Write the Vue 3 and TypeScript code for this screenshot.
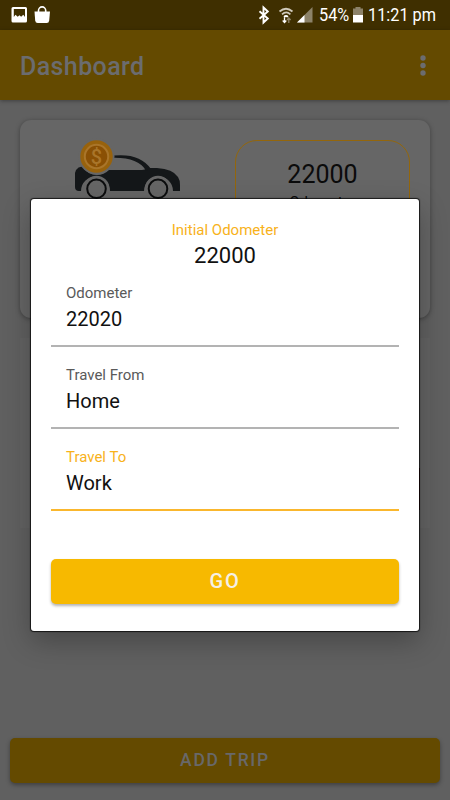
<script setup lang="ts">
import { ref } from 'vue'

interface Field {
  label: string
  value: string
  active: boolean
}

const initialOdometer = 22000
const fields = ref<Field[]>([
  { label: 'Odometer', value: '22020', active: false },
  { label: 'Travel From', value: 'Home', active: false },
  { label: 'Travel To', value: 'Work', active: true },
])
</script>

<template>
  <div class="screen">
    <div class="status">
      <svg class="left-icons" width="42" height="20" viewBox="0 0 42 20" fill="#fff">
        <path fill-rule="evenodd" d="M2 2h12.500a1.500 1.500 0 0 1 1.500 1.500v12.500a1.500 1.500 0 0 1-1.500 1.500H2a1.500 1.500 0 0 1-1.500-1.500v-12.500A1.500 1.500 0 0 1 2 2zM2.800 4v8L4.500 9.800l2.200 2 1.800-1.500 1.600 1.500 2.200-2 1.700 2.200V4z" />
        <path d="M23.500 6.500h15.500l-.800 9q-.300 2.500-2.500 2.500h-9q-2.200 0-2.500-2.500z" />
        <path d="M27.500 8V5.500a3.600 3.600 0 0 1 7.200 0V8" fill="none" stroke="#fff" stroke-width="1.600" />
      </svg>
      <svg class="right-icons" width="58" height="20" viewBox="0 0 58 20">
        <path d="M1.500 6.200l8.300 7.300-4.300 4V2.500l4.300 4-8.300 7.300" fill="none" stroke="#fff" stroke-width="1.900" />
        <g fill="none" stroke="#d0cabb" stroke-width="1.700">
          <path d="M21.500 6.500q6.500-5.500 13 0M24 9.300q4.200-3.700 8.400 0" />
          <path d="M26 11.900q2-1.800 4 0" stroke="#fff" />
        </g>
        <path d="M26.500 12.300v5M24.700 15.500l1.800 2 1.800-2" stroke="#fff" stroke-width="1.300" fill="none" />
        <path d="M30.800 18v-5M29 15l1.800-2 1.800 2" stroke="#90866b" stroke-width="1.300" fill="none" />
        <path d="M54.500 2v15.500H39z" fill="#8c8269" />
        <path d="M46.500 10v7.500H39z" fill="#fff" />
      </svg>
      <span class="status-text percent">54%</span>
      <svg class="battery" width="10" height="16" viewBox="0 0 10 16">
        <path d="M2.500 0h5v1.500H10V8H0V1.500h2.500z" fill="#8c8269" />
        <path d="M0 8h10v7.500H0z" fill="#fff" />
      </svg>
      <span class="status-text clock">11:21 pm</span>
    </div>

    <header class="bar">
      <h1>Dashboard</h1>
      <svg width="6" height="22" viewBox="0 0 6 22" fill="#6b6c6f">
        <circle cx="3" cy="3" r="2.700" />
        <circle cx="3" cy="10.500" r="2.700" />
        <circle cx="3" cy="18" r="2.700" />
      </svg>
    </header>

    <main class="content">
      <section class="card">
        <svg class="car" width="110" height="64" viewBox="0 0 110 64">
          <path d="M2 19q3-4 7-3 5 8 14 8 7 0 12-5h33q3 0 5-2h10q16 1 21 9 2 3 2 8v6h-7a14.500 14.500 0 0 0-29 0H36a14.500 14.500 0 0 0-29 0H5q-4 0-4-4V22z" fill="#141719" />
          <path d="M40 4.500q26-2.500 37 13.500l-5 1.500q-8-13-32-12.700z" fill="#141719" />
          <g fill="#666" stroke="#666" stroke-width="3">
            <circle cx="22.500" cy="37.800" r="11.500" />
            <circle cx="84" cy="37.800" r="11.500" />
          </g>
          <g fill="#666" stroke="#0c0d0e" stroke-width="2">
            <circle cx="22.500" cy="37.800" r="9.300" />
            <circle cx="84" cy="37.800" r="9.300" />
          </g>
          <circle cx="22.500" cy="5.500" r="18" fill="#666" />
          <circle cx="22.500" cy="5.500" r="16.200" fill="#98620c" />
          <circle cx="22.500" cy="5.500" r="11.700" fill="#8a5004" stroke="#a9752a" stroke-width="2" />
          <text x="22.500" y="12.500" text-anchor="middle" class="dollar">$</text>
        </svg>
        <div class="odometer">
          <strong>{{ initialOdometer }}</strong>
          <span>Odometer</span>
        </div>
      </section>
      <section class="panel"><i></i></section>
    </main>

    <footer class="footer">
      <button class="button dim">ADD TRIP</button>
    </footer>

    <div class="overlay">
      <form class="dialog" @submit.prevent>
        <div class="caption">Initial Odometer</div>
        <div class="initial">{{ initialOdometer }}</div>
        <label v-for="field in fields" :key="field.label" class="field" :class="{ active: field.active }">
          <span>{{ field.label }}</span>
          <input v-model="field.value" type="text" />
        </label>
        <button class="button go">GO</button>
      </form>
    </div>
  </div>
</template>

<style>
body {
  background: #606060;
}
</style>

<style scoped>
* {
  box-sizing: border-box;
}
.screen {
  position: relative;
  width: 450px;
  height: 800px;
  display: flex;
  flex-direction: column;
  overflow: hidden;
  background: #606060;
  font-family: Roboto, sans-serif;
}
.status {
  height: 30px;
  flex: none;
  display: flex;
  align-items: flex-start;
  padding: 5px 0 0 11px;
  background: #3f2f00;
  color: #fff;
}
.right-icons {
  margin-left: 205px;
}
.status-text {
  font-size: 18.5px;
  line-height: 21px;
  white-space: nowrap;
  transform-origin: left center;
  transform: scaleX(0.88);
}
.percent {
  width: 32px;
  margin-left: 3px;
}
.battery {
  margin: 2px 0 0 2px;
}
.clock {
  margin-left: 5px;
}
.left-icons,
.right-icons,
.battery {
  flex: none;
}
.bar {
  height: 70px;
  flex: none;
  display: flex;
  align-items: center;
  justify-content: space-between;
  padding: 3px 24px 0 20px;
  background: #644a00;
  box-shadow: 0 1px 4px rgba(0, 0, 0, 0.35);
}
h1 {
  margin: 0;
  font-size: 25px;
  font-weight: 500;
  line-height: 30px;
  letter-spacing: 0.4px;
  color: #6b6c6f;
}
.bar svg {
  margin-top: -2px;
}
.content {
  flex: 1;
  padding: 20px 20px 0;
}
.card {
  height: 198px;
  display: flex;
  justify-content: space-between;
  padding: 20px 20px 0 54px;
  border-radius: 11px;
  background: #666;
  box-shadow: 0 1px 5px rgba(0, 0, 0, 0.35);
}
.car {
  margin-top: 11px;
  overflow: visible;
}
.dollar {
  font-size: 20px;
  font-weight: 500;
  fill: #a9752a;
}
.odometer {
  width: 175px;
  height: 130px;
  display: flex;
  flex-direction: column;
  align-items: center;
  padding-top: 19px;
  border: 1px solid #93660c;
  border-radius: 22px;
  color: #0b0b0b;
}
.odometer strong {
  font-size: 25px;
  font-weight: 400;
  line-height: 30px;
}
.odometer span {
  margin-top: 2px;
  font-size: 15px;
  line-height: 20px;
}
.panel {
  height: 190px;
  margin-top: 20px;
  padding-top: 130px;
  background: #636363;
}
.panel i {
  display: block;
  width: 10px;
  height: 42px;
  margin-left: 390px;
  background: #300b0d;
}
.footer {
  height: 72px;
  padding: 10px;
}
.button {
  display: block;
  width: 100%;
  height: 45px;
  padding: 0;
  border: 0;
  border-radius: 5px;
  font: 500 20px/45px Roboto, sans-serif;
  letter-spacing: 1.9px;
}
.dim {
  background: #644a00;
  color: #68686a;
  font-size: 17.5px;
  letter-spacing: 1.7px;
  box-shadow: 0 2px 4px rgba(0, 0, 0, 0.35);
}
.overlay {
  position: absolute;
  inset: 0;
  padding: 199px 31px 0;
}
.dialog {
  height: 432px;
  padding: 20px 20px 0;
  border-radius: 3px;
  background: #fff;
  text-align: center;
  box-shadow: 0 0 1px 1px rgba(0, 0, 0, 0.75), 0 10px 28px rgba(0, 0, 0, 0.28);
}
.caption {
  font-size: 15px;
  line-height: 22px;
  color: #f8b21b;
}
.initial {
  margin-bottom: 10px;
  font-size: 22px;
  line-height: 30px;
  color: #111;
}
.field {
  display: flex;
  flex-direction: column;
  height: 66px;
  margin-bottom: 16px;
  padding: 3px 15px 0;
  border-bottom: 2px solid #b3b3b3;
  text-align: left;
}
.field span {
  font-size: 15px;
  line-height: 18px;
  color: #5a5a5a;
}
.field input {
  width: 100%;
  height: 30px;
  margin-top: 2px;
  padding: 0;
  border: 0;
  outline: 0;
  background: none;
  font: 20px/30px Roboto, sans-serif;
  color: #111;
}
.field.active {
  border-color: #fab72d;
}
.field.active span {
  color: #f8b21b;
}
.go {
  margin-top: 48px;
  background: #f7b900;
  color: #f5f0e6;
  box-shadow: 0 2px 3px rgba(0, 0, 0, 0.3);
}
</style>
